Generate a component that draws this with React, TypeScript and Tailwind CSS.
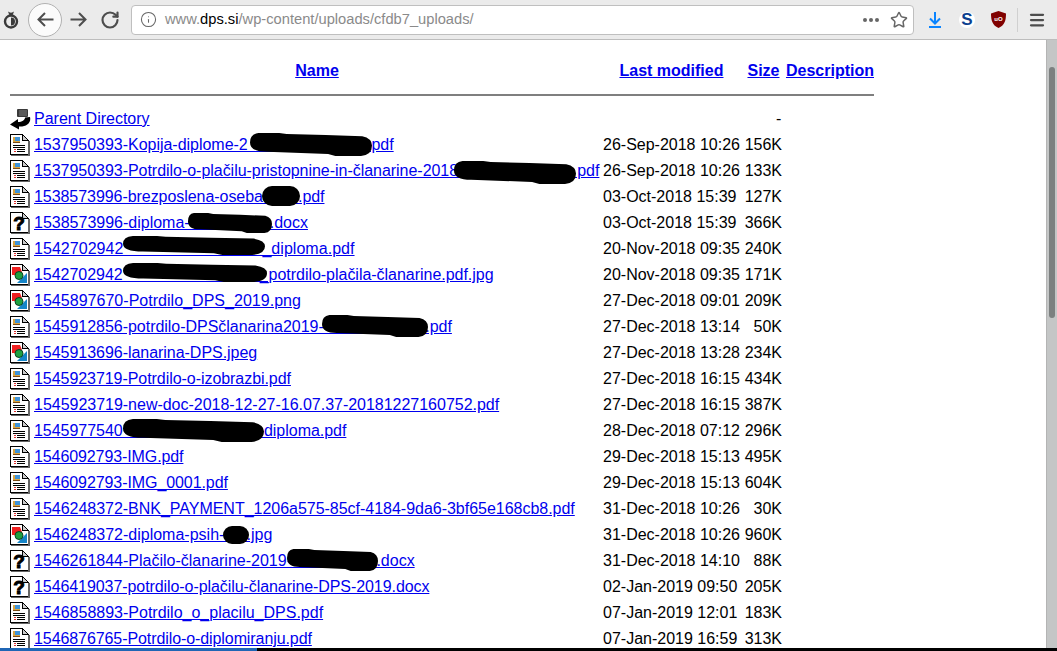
import { Info, RotateCw, Star, Menu } from 'lucide-react';

const FONT = "font-['Liberation_Sans',Arial,sans-serif]";
const gap = (n: number) => '\u00a0'.repeat(n);

type Kind = 'doc' | 'unknown' | 'img';
type Row = {
    kind: Kind;
    name: string;
    date: string;
    size: string;
    track?: string;
    blob?: string;
};

const rows: Row[] = [
    { kind: 'doc', name: `1537950393-Kopija-diplome-2${gap(28)}pdf`, date: '26-Sep-2018 10:26', size: '156K', track: 'tracking-[-0.025px]', blob: 'left-[240px] top-[1px] w-[122px] h-[23px]' },
    { kind: 'doc', name: `1537950393-Potrdilo-o-plačilu-pristopnine-in-članarine-2018${gap(27)}pdf`, date: '26-Sep-2018 10:26', size: '133K', track: 'tracking-[-0.033px]', blob: 'left-[444px] top-[3px] w-[122px] h-[23px]' },
    { kind: 'doc', name: `1538573996-brezposlena-oseba${gap(8)}.pdf`, date: '03-Oct-2018 15:39', size: '127K', track: 'tracking-[-0.055px]', blob: 'left-[252px] top-[2px] w-[38px] h-[20px] rounded-full' },
    { kind: 'unknown', name: `1538573996-diploma-${gap(18)}.docx`, date: '03-Oct-2018 15:39', size: '366K', blob: 'left-[178px] top-[3px] w-[84px] h-[20px]' },
    { kind: 'doc', name: `1542702942${gap(31)}_diploma.pdf`, date: '20-Nov-2018 09:35', size: '240K', track: 'tracking-[0.04px]', blob: 'left-[113px] top-[0px] w-[142px] h-[19px]' },
    { kind: 'img', name: `1542702942${gap(31)}_potrdilo-plačila-članarine.pdf.jpg`, date: '20-Nov-2018 09:35', size: '171K', track: 'tracking-[-0.027px]', blob: 'left-[113px] top-[1px] w-[144px] h-[19px]' },
    { kind: 'img', name: '1545897670-Potrdilo_DPS_2019.png', date: '27-Dec-2018 09:01', size: '209K', track: 'tracking-[0.03px]' },
    { kind: 'doc', name: `1545912856-potrdilo-DPSčlanarina2019-${gap(23)}.pdf`, date: '27-Dec-2018 13:14', size: '50K', track: 'tracking-[-0.03px]', blob: 'left-[312px] top-[1px] w-[106px] h-[22px]' },
    { kind: 'img', name: '1545913696-lanarina-DPS.jpeg', date: '27-Dec-2018 13:28', size: '234K', track: 'tracking-[-0.035px]' },
    { kind: 'doc', name: '1545923719-Potrdilo-o-izobrazbi.pdf', date: '27-Dec-2018 16:15', size: '434K', track: 'tracking-[-0.054px]' },
    { kind: 'doc', name: '1545923719-new-doc-2018-12-27-16.07.37-20181227160752.pdf', date: '27-Dec-2018 16:15', size: '387K', track: 'tracking-[-0.018px]' },
    { kind: 'doc', name: `1545977540${gap(32)}diploma.pdf`, date: '28-Dec-2018 07:12', size: '296K', track: 'tracking-[-0.03px]', blob: 'left-[113px] top-[1px] w-[141px] h-[23px]' },
    { kind: 'doc', name: '1546092793-IMG.pdf', date: '29-Dec-2018 15:13', size: '495K', track: 'tracking-[-0.1px]' },
    { kind: 'doc', name: '1546092793-IMG_0001.pdf', date: '29-Dec-2018 15:13', size: '604K', track: 'tracking-[-0.08px]' },
    { kind: 'doc', name: '1546248372-BNK_PAYMENT_1206a575-85cf-4184-9da6-3bf65e168cb8.pdf', date: '31-Dec-2018 10:26', size: '30K', track: 'tracking-[-0.02px]' },
    { kind: 'img', name: `1546248372-diploma-psih-${gap(5)}.jpg`, date: '31-Dec-2018 10:26', size: '960K', blob: 'left-[213px] top-[4px] w-[26px] h-[18px] rounded-full' },
    { kind: 'unknown', name: `1546261844-Plačilo-članarine-2019-${gap(19)}.docx`, date: '31-Dec-2018 14:10', size: '88K', blob: 'left-[277px] top-[1px] w-[91px] h-[22px]' },
    { kind: 'unknown', name: '1546419037-potrdilo-o-plačilu-članarine-DPS-2019.docx', date: '02-Jan-2019 09:50', size: '205K', track: 'tracking-[-0.075px]' },
    { kind: 'doc', name: '1546858893-Potrdilo_o_placilu_DPS.pdf', date: '07-Jan-2019 12:01', size: '183K' },
    { kind: 'doc', name: '1546876765-Potrdilo-o-diplomiranju.pdf', date: '07-Jan-2019 16:59', size: '313K', track: 'tracking-[-0.085px]' },
];

function FileIcon({ kind }: { kind: Kind }) {
    return (
        <svg width="20" height="22" viewBox="0 0 20 22" shapeRendering="crispEdges">
            <path d="M0.5 0.5H12.5L18.5 6.5V20.5H0.5Z" fill="#fff" stroke="#000" />
            <path d="M12.5 0.5V6.5H18.5Z" fill="#ccc" stroke="#000" />
            <path d="M18 7H19.5V21.5H1V20.5H18Z" fill="#666" />
            {kind === 'doc' && (
                <>
                    <rect x="3" y="3" width="7" height="6" fill="#d9a441" />
                    <rect x="5" y="3" width="5" height="4" fill="#3f93d6" />
                    <rect x="3" y="8" width="7" height="1" fill="#7a4a18" />
                    <rect x="3" y="11" width="12" height="1" fill="#000" />
                    <rect x="3" y="13" width="12" height="1" fill="#000" />
                    <rect x="4" y="15" width="2" height="1" fill="#e03030" />
                    <rect x="7" y="15" width="8" height="1" fill="#000" />
                    <rect x="4" y="17" width="2" height="1" fill="#e03030" />
                    <rect x="7" y="17" width="8" height="1" fill="#000" />
                </>
            )}
            {kind === 'unknown' && (
                <text x="9" y="17.5" textAnchor="middle" fontSize="19" fontWeight="700" fontFamily="Liberation Sans" fill="#000" stroke="#000" strokeWidth="1" shapeRendering="auto">?</text>
            )}
            {kind === 'img' && (
                <g shapeRendering="auto">
                    <path d="M2 3H10L12 8H7V11H2Z" fill="#f02020" />
                    <path d="M17 9V19H7Z" fill="#1585c8" />
                    <circle cx="9" cy="11.5" r="4" fill="#20a040" stroke="#0a4020" />
                </g>
            )}
        </svg>
    );
}

function ParentIcon() {
    return (
        <svg width="21" height="21" viewBox="0 0 21 21">
            <rect x="7" y="0" width="11" height="8" rx="1" fill="#3a3a3a" />
            <path d="M9 2H17M9 4H17M9 6H17" stroke="#999" strokeWidth="0.7" />
            <path d="M0 15.5L8 10V13C12 13 15 11 15 8.5L20 8C21.5 14 16 18 9 17.5V20.5Z" fill="#000" />
        </svg>
    );
}

function Blob({ cls }: { cls: string }) {
    if (cls.includes('rounded-full')) {
        return <span className={`absolute bg-black ${cls}`} />;
    }
    return (
        <svg className={`absolute ${cls}`} viewBox="0 0 100 22" preserveAspectRatio="none">
            <path d="M7 0H24L30 1L62 2L92 3Q100 5 100 12Q100 21 91 22H70L64 20L14 18Q0 18 0 9Q0 1 7 0Z" fill="#000" />
        </svg>
    );
}

function Arrow({ flip }: { flip?: boolean }) {
    return (
        <svg width="17" height="15" viewBox="0 0 17 15" fill="none" stroke="#4d4d4d" strokeWidth="2" className={flip ? 'rotate-180' : ''}>
            <path d="M1.5 7.5H16.5M8 1L1.5 7.5L8 14" />
        </svg>
    );
}

function Toolbar() {
    return (
        <div className="h-10 shrink-0 flex items-center bg-[#ebebeb] border-b border-[#bdbdbd] text-[#4d4d4d]">
            <div className="w-[20px] pl-[2px] flex justify-center">
                <svg width="16" height="18" viewBox="0 0 16 18" fill="none">
                    <path d="M5 0.5C6.5 2 9.5 2 11 0.5L9.5 4.5H6.5Z" fill="#3a3a3a" />
                    <circle cx="8" cy="10.5" r="6" stroke="#3a3a3a" strokeWidth="2.4" />
                    <path d="M8 6.5A4 4 0 0 1 8 14.5Z" fill="#3a3a3a" />
                </svg>
            </div>
            <div className="ml-2 w-[34px] h-[34px] rounded-full bg-[#fbfbfb] border border-[#b1b1b1] flex items-center justify-center">
                <Arrow />
            </div>
            <div className="w-[32px] flex justify-center"><Arrow flip /></div>
            <div className="w-[32px] flex justify-center"><RotateCw size={20} strokeWidth={2.6} /></div>
            <div className="ml-[5px] w-[783px] h-[30px] rounded-[4px] bg-white border border-[#bfbfbf] flex items-center text-[14.7px]">
                <Info size={17} strokeWidth={1.5} className="ml-[8px] text-[#666]" />
                <span className="ml-[8px] text-[#8a8a8a]">www.<span className="text-black">dps.si</span>/wp-content/uploads/cfdb7_uploads/</span>
                <div className="ml-auto flex items-center">
                    <span className="flex gap-[2px]">
                        <i className="w-1 h-1 rounded-full bg-[#666]" />
                        <i className="w-1 h-1 rounded-full bg-[#666]" />
                        <i className="w-1 h-1 rounded-full bg-[#666]" />
                    </span>
                    <Star size={18} strokeWidth={2} className="ml-[11px] mr-[5px] text-[#666]" />
                </div>
            </div>
            <div className="ml-[13px] w-4 flex justify-center">
                <svg width="12" height="16" viewBox="0 0 12 16" fill="none" stroke="#0a84ff" strokeWidth="2">
                    <path d="M6 0V11M1 6.5L6 11.5L11 6.5M0 15H12" />
                </svg>
            </div>
            <div className="ml-[16px] w-[16px] h-[16px] rounded-full bg-white flex items-center justify-center text-[#0c3f8f] text-[17px] leading-none font-bold">S</div>
            <div className="ml-[15px] w-4 flex justify-center">
                <svg width="15" height="17" viewBox="0 0 15 17">
                    <path d="M7.5 0L15 2.5C15 9 14 14 7.5 17C1 14 0 9 0 2.5Z" fill="#800000" />
                    <text x="7.5" y="10" textAnchor="middle" fontSize="6" fontWeight="700" fontFamily="Liberation Sans" fill="#fff">uO</text>
                </svg>
            </div>
            <div className="ml-[11px] w-px h-6 bg-[#d0d0d0]" />
            <div className="ml-[10px]"><Menu size={18} strokeWidth={3} /></div>
        </div>
    );
}

export default function App() {
    return (
        <div className={`h-[651px] w-[1057px] overflow-hidden relative flex flex-col bg-white text-base text-black ${FONT}`}>
            <Toolbar />
            <div className="flex-1 flex min-h-0">
                <main className="flex-1 pl-[10px] overflow-hidden">
                    <div className="w-[864px] h-[26px] mt-[18px] flex items-center font-bold text-[#0000ee] underline">
                        <div className="ml-[24px] w-[566px] text-center"><a href="#">Name</a></div>
                        <div className="ml-[3px] w-[137px] text-center"><a href="#">Last modified</a></div>
                        <div className="ml-[4px] w-[39px] text-center"><a href="#">Size</a></div>
                        <div className="ml-[3px]"><a href="#">Description</a></div>
                    </div>
                    <hr className="w-[864px] mt-[10px] border-0 h-[2px] bg-[#7f7f7f]" />
                    <div className="mt-[10px] h-[26px] flex items-center">
                        <div className="w-[24px] flex"><ParentIcon /></div>
                        <a href="#" className="text-[#0000ee] underline">Parent Directory</a>
                        <div className="ml-auto w-[5px] text-right mr-[265px]">-</div>
                    </div>
                    {rows.map((r) => (
                        <div key={r.name} className="h-[26px] flex items-center relative whitespace-nowrap">
                            <div className="w-[24px] flex"><FileIcon kind={r.kind} /></div>
                            <a href="#" className="w-[569px] text-[#0000ee]"><span className={`underline ${r.track ?? ''}`}>{r.name}</span></a>
                            <div className="w-[141px]">{r.date}</div>
                            <div className="w-[38px] text-right">{r.size}</div>
                            {r.blob && <Blob cls={r.blob} />}
                        </div>
                    ))}
                </main>
                <aside className="w-[11px] bg-[#c4c6c6] border-l border-[#b4b4b4] flex justify-center">
                    <div className="mt-[27px] w-[6px] h-[251px] rounded-full bg-[#7c8080]" />
                </aside>
            </div>
            <div className="absolute left-0 right-0 bottom-0 h-[3px] flex">
                <div className="w-[257px] bg-[#1f66b5]" />
                <div className="flex-1 bg-black" />
            </div>
        </div>
    );
}
